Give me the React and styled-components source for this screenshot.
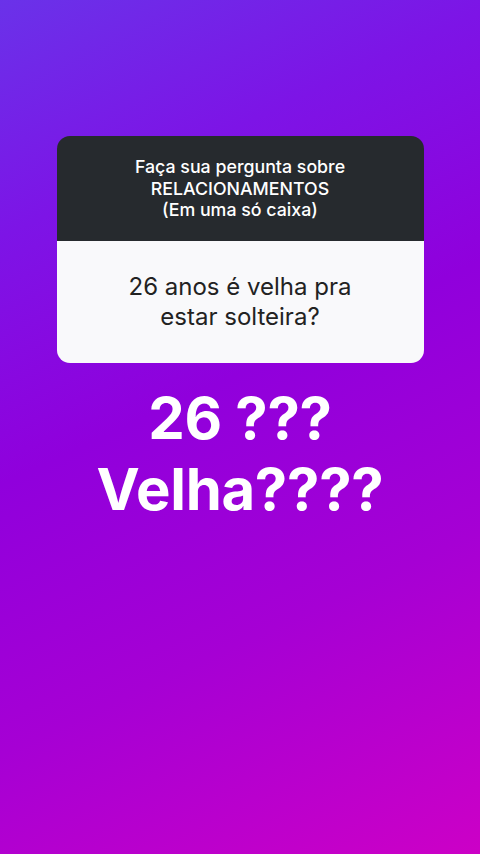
import React from "react";
import styled, { createGlobalStyle } from "styled-components";

const GlobalStyle = createGlobalStyle`
  html, body {
    margin: 0;
    padding: 0;
  }
  body {
    font-family: Inter, "Liberation Sans", sans-serif;
  }
`;

/* fundo da story */
const Story = styled.div`
  width: 480px;
  height: 854px;
  display: flex;
  flex-direction: column;
  align-items: center;
  padding-top: 136px;
  box-sizing: border-box;
  overflow: hidden;
  background: linear-gradient(
    155deg,
    #6a32e9 0%,
    #7d14e6 22%,
    #9000dc 45%,
    #a600d4 70%,
    #cc00c6 100%
  );
`;

/* caixinha de pergunta */
const QuestionBox = styled.div`
  width: 367px;
  border-radius: 13px;
  overflow: hidden;
  display: flex;
  flex-direction: column;
`;

const BoxHeader = styled.div`
  height: 105px;
  background: #262a2e;
  display: flex;
  flex-direction: column;
  justify-content: center;
  align-items: center;
`;

const HeaderLine = styled.div`
  color: #fff;
  font-size: 17.8px;
  font-weight: 500;
  line-height: 21.5px;
  text-align: center;
`;

const BoxBody = styled.div`
  height: 122px;
  background: #f9f9fb;
  display: flex;
  flex-direction: column;
  justify-content: center;
  align-items: center;
`;

const Answer = styled.div`
  color: #222;
  font-size: 24px;
  font-weight: 400;
  line-height: 30px;
  text-align: center;
`;

const BigText = styled.div`
  margin-top: 20px;
  color: #fff;
  font-size: 58px;
  font-weight: 700;
  line-height: 71px;
  letter-spacing: -0.3px;
  text-align: center;
`;

export default function App() {
  return (
    <>
      <GlobalStyle />
      <Story>
        <QuestionBox>
          <BoxHeader>
            <HeaderLine>Faça sua pergunta sobre</HeaderLine>
            <HeaderLine>RELACIONAMENTOS</HeaderLine>
            <HeaderLine>(Em uma só caixa)</HeaderLine>
          </BoxHeader>
          <BoxBody>
            <Answer>26 anos é velha pra</Answer>
            <Answer>estar solteira?</Answer>
          </BoxBody>
        </QuestionBox>
        <BigText>
          26 ???
          <br />
          Velha????
        </BigText>
      </Story>
    </>
  );
}
